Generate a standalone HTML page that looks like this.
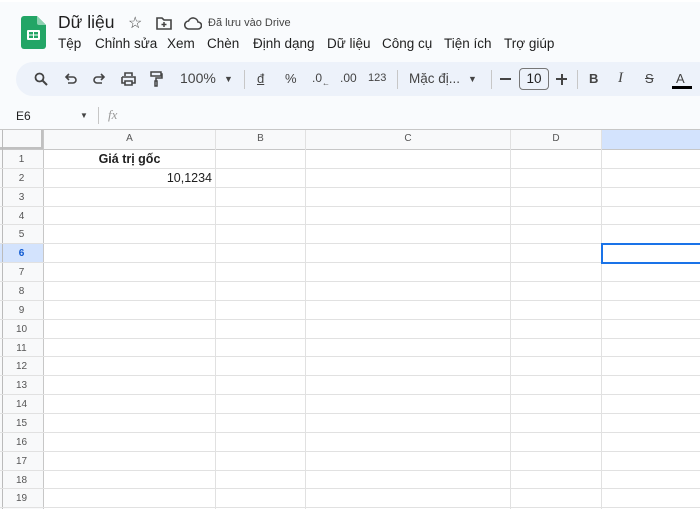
<!DOCTYPE html>
<html><head><meta charset="utf-8"><style>
*{margin:0;padding:0;box-sizing:border-box}
body{width:700px;height:509px;overflow:hidden;background:#f9fbfd;font-family:"Liberation Sans",Arial,sans-serif;color:#1f1f1f;position:relative}
.a{position:absolute;white-space:nowrap}
.menu{top:36px;font-size:13.5px}
.tb{position:absolute;left:16px;top:62px;width:700px;height:34px;background:#edf2fa;border-radius:17px}
.t{position:absolute;top:71px;font-size:13px;color:#444}
.sep{position:absolute;top:70px;width:1px;height:19px;background:#c7c7c7}
.grid{position:absolute;left:0;top:130px;width:700px;height:379px;background:#fff}
.hl{position:absolute;background:#e1e1e1}
.rn{position:absolute;left:0;width:43px;text-align:center;font-size:10px;color:#555}
.ch{position:absolute;top:133px;font-size:10px;color:#555;text-align:center}
</style></head><body>
<div class="a" style="left:0;top:0;width:700px;height:2px;background:#fff"></div>
<svg class="a" style="left:21px;top:16px" width="25" height="33" viewBox="0 0 25 33"><path d="M3 0h13l9 9v21a3 3 0 0 1-3 3H3a3 3 0 0 1-3-3V3a3 3 0 0 1 3-3z" fill="#23a566"/><path d="M16 0l9 9h-7a2 2 0 0 1-2-2z" fill="#8ed1b1"/><rect x="6" y="14" width="13" height="10" rx="1" fill="#fff"/><rect x="8" y="16" width="4" height="2.5" fill="#23a566"/><rect x="13" y="16" width="4" height="2.5" fill="#23a566"/><rect x="8" y="19.5" width="4" height="2.5" fill="#23a566"/><rect x="13" y="19.5" width="4" height="2.5" fill="#23a566"/></svg>
<div class="a" style="left:58px;top:12px;font-size:17.5px;font-weight:500">Dữ liệu</div>
<div class="a" style="left:128px;top:13px;font-size:16px;color:#444">☆</div>
<svg class="a" style="left:156px;top:17px" width="16" height="13" viewBox="0 0 16 13"><path d="M1 1h5l2 2h7v9H1z" fill="none" stroke="#444" stroke-width="1.6"/><path d="M8 5v5M5.5 7.5h5" stroke="#444" stroke-width="1.5"/></svg>
<svg class="a" style="left:184px;top:17px" width="18" height="13" viewBox="0 0 18 13"><path d="M5 12h9a3.5 3.5 0 0 0 0-7 5 5 0 0 0-9.5-1A4 4 0 0 0 5 12z" fill="none" stroke="#444" stroke-width="1.6"/></svg>
<div class="a" style="left:208px;top:17px;font-size:11px;color:#444">Đã lưu vào Drive</div>
<div class="a menu" style="left:58px">Tệp</div>
<div class="a menu" style="left:95px">Chỉnh sửa</div>
<div class="a menu" style="left:167px">Xem</div>
<div class="a menu" style="left:207px">Chèn</div>
<div class="a menu" style="left:253px">Định dạng</div>
<div class="a menu" style="left:327px">Dữ liệu</div>
<div class="a menu" style="left:382px">Công cụ</div>
<div class="a menu" style="left:444px">Tiện ích</div>
<div class="a menu" style="left:504px">Trợ giúp</div>
<div class="tb"></div>
<svg class="a" style="left:34px;top:72px" width="14" height="14" viewBox="0 0 14 14"><circle cx="5.5" cy="5.5" r="4" fill="none" stroke="#444" stroke-width="1.8"/><path d="M8.5 8.5l4.5 4.5" stroke="#444" stroke-width="2"/></svg>
<svg class="a" style="left:64px;top:73px" width="13" height="12" viewBox="0 0 13 12"><path d="M3 4h6a3 3 0 0 1 0 6H4M5 1L2 4l3 3" fill="none" stroke="#444" stroke-width="1.6"/></svg>
<svg class="a" style="left:93px;top:73px" width="13" height="12" viewBox="0 0 13 12"><path d="M10 4H4a3 3 0 0 0 0 6h5M8 1l3 3-3 3" fill="none" stroke="#444" stroke-width="1.6"/></svg>
<svg class="a" style="left:121px;top:72px" width="15" height="14" viewBox="0 0 15 14"><path d="M4 4V1h7v3M1 5h13v6h-3M4 11H1V5M4 9h7v4H4z" fill="none" stroke="#444" stroke-width="1.6"/></svg>
<svg class="a" style="left:150px;top:71px" width="13" height="16" viewBox="0 0 13 16"><path d="M1 1h10v4H1zM11 3h1v4H6v3M5 10h2v5H5z" fill="none" stroke="#444" stroke-width="1.5"/></svg>
<div class="t" style="left:180px;font-size:14px;top:70px">100%</div>
<div class="t" style="left:224px;font-size:9px;top:74px">▼</div>
<div class="sep" style="left:244px"></div>
<div class="t" style="left:257px;text-decoration:underline">đ</div>
<div class="t" style="left:285px">%</div>
<div class="t" style="left:312px;font-size:12px">.0<sub style="font-size:8px">←</sub></div>
<div class="t" style="left:340px;font-size:12px">.00</div>
<div class="t" style="left:368px;font-size:11px;top:72px">123</div>
<div class="sep" style="left:397px"></div>
<div class="t" style="left:409px;font-size:13.5px">Mặc đị...</div>
<div class="t" style="left:468px;font-size:9px;top:74px">▼</div>
<div class="sep" style="left:491px"></div>
<div class="a" style="left:500px;top:78px;width:11px;height:2px;background:#444"></div>
<div class="a" style="left:519px;top:68px;width:30px;height:22px;border:1px solid #777;border-radius:4px;font-size:13.5px;text-align:center;line-height:20px">10</div>
<div class="a" style="left:556px;top:78px;width:11px;height:2px;background:#444"></div>
<div class="a" style="left:560.5px;top:73.5px;width:2px;height:11px;background:#444"></div>
<div class="sep" style="left:577px"></div>
<div class="t" style="left:589px;font-weight:bold">B</div>
<div class="t" style="left:618px;font-style:italic;font-family:'Liberation Serif',serif;font-size:15px;top:70px">I</div>
<div class="t" style="left:645px;text-decoration:line-through">S</div>
<div class="t" style="left:676px">A</div>
<div class="a" style="left:672px;top:86px;width:20px;height:3px;background:#000"></div>
<div class="a" style="left:16px;top:109px;font-size:12px">E6</div>
<div class="a" style="left:80px;top:111px;font-size:8px;color:#444">▼</div>
<div class="a" style="left:98px;top:107px;width:1px;height:17px;background:#c7c7c7"></div>
<div class="a" style="left:108px;top:107px;font-size:13px;font-style:italic;color:#999;font-family:'Liberation Serif',serif">fx</div>
<div class="grid"></div>
<div class="a" style="left:0;top:130px;width:700px;height:20px;background:#f8f9fa"></div>
<div class="a" style="left:601px;top:130px;width:99px;height:20px;background:#d3e3fd"></div>
<div class="a" style="left:0;top:150px;width:43px;height:359px;background:#f8f9fa"></div>
<div class="a" style="left:0;top:244px;width:43px;height:19px;background:#d3e3fd"></div>
<div class="a" style="left:0;top:130px;width:44px;height:20px;background:#f8f9fa;border-right:3px solid #c0c0c0;border-bottom:3px solid #c0c0c0"></div>
<div class="hl" style="left:0;top:129px;width:700px;height:1px;background:#c7c7c7"></div>
<div class="hl" style="left:0;top:149px;width:700px;height:1px;background:#c7c7c7"></div>
<div class="hl" style="left:2px;top:130px;width:1px;height:379px;background:#bbb"></div>
<div class="hl" style="left:43px;top:130px;width:1px;height:379px;background:#c7c7c7"></div>
<div class="hl" style="left:215px;top:130px;width:1px;height:379px"></div>
<div class="hl" style="left:305px;top:130px;width:1px;height:379px"></div>
<div class="hl" style="left:510px;top:130px;width:1px;height:379px"></div>
<div class="hl" style="left:601px;top:130px;width:1px;height:379px"></div>
<div class="ch" style="left:44px;width:171px">A</div>
<div class="ch" style="left:216px;width:89px">B</div>
<div class="ch" style="left:306px;width:204px">C</div>
<div class="ch" style="left:511px;width:90px">D</div>
<div id="rows"></div>
<script>
var h='';for(var i=1;i<=19;i++){var t=150+(i-1)*18.85;h+='<div class="hl" style="left:0;top:'+(t+18.85-1).toFixed(1)+'px;width:700px;height:1px"></div><div class="rn" style="top:'+(t+4).toFixed(1)+'px;'+(i==6?'font-weight:bold;color:#0b57d0':'')+'">'+i+'</div>';}
document.getElementById('rows').innerHTML=h;
</script>
<div class="a" style="left:44px;top:152px;width:171px;text-align:center;font-size:12.5px;font-weight:bold">Giá trị gốc</div>
<div class="a" style="left:44px;top:171px;width:168px;text-align:right;font-size:12.5px">10,1234</div>
<div class="a" style="left:601px;top:243px;width:105px;height:21px;border:2px solid #1a73e8"></div>
</body></html>
